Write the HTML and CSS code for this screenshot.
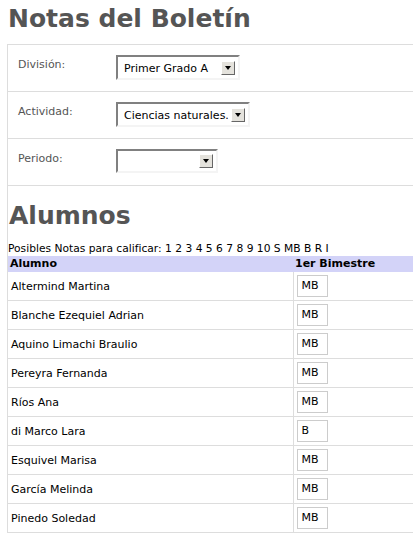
FILE: index.html
```html
<!DOCTYPE html>
<html lang="es">
<head>
<meta charset="utf-8">
<title>Notas del Boletín</title>
<link rel="stylesheet" href="styles.css">
</head>
<body>
<h1 class="title">Notas del Boletín</h1>
<div class="panel">
  <div class="form">
    <div class="form-row">
      <span class="label">División:</span>
      <div class="select sel-division"><span class="sel-text">Primer Grado A</span><span class="arrow"></span></div>
    </div>
    <div class="form-row">
      <span class="label">Actividad:</span>
      <div class="select sel-actividad"><span class="sel-text">Ciencias naturales.</span><span class="arrow"></span></div>
    </div>
    <div class="form-row">
      <span class="label">Periodo:</span>
      <div class="select sel-periodo"><span class="sel-text"></span><span class="arrow"></span></div>
    </div>
  </div>
  <h2 class="subtitle">Alumnos</h2>
  <p class="hint">Posibles Notas para calificar: 1 2 3 4 5 6 7 8 9 10 S MB B R I</p>
  <table class="grades">
    <thead>
      <tr><th class="col-name">Alumno</th><th class="col-grade">1er Bimestre</th></tr>
    </thead>
    <tbody>
      <tr><td>Altermind Martina</td><td><span class="grade-box">MB</span></td></tr>
      <tr><td>Blanche Ezequiel Adrian</td><td><span class="grade-box">MB</span></td></tr>
      <tr><td>Aquino Limachi Braulio</td><td><span class="grade-box">MB</span></td></tr>
      <tr><td>Pereyra Fernanda</td><td><span class="grade-box">MB</span></td></tr>
      <tr><td>Ríos Ana</td><td><span class="grade-box">MB</span></td></tr>
      <tr><td>di Marco Lara</td><td><span class="grade-box">B</span></td></tr>
      <tr><td>Esquivel Marisa</td><td><span class="grade-box">MB</span></td></tr>
      <tr><td>García Melinda</td><td><span class="grade-box">MB</span></td></tr>
      <tr><td>Pinedo Soledad</td><td><span class="grade-box">MB</span></td></tr>
    </tbody>
  </table>
</div>
</body>
</html>
```
FILE: styles.css
```css
html, body {
  margin: 0;
  padding: 0;
  background: #fff;
}
body {
  font-family: "DejaVu Sans", Verdana, sans-serif;
  font-size: 11px;
  color: #000;
  padding-left: 7px;
  overflow: hidden;
}
.title {
  margin: 0;
  padding: 4px 0 0 1px;
  height: 44px;
  box-sizing: border-box;
  font-size: 25px;
  font-weight: bold;
  color: #555;
  line-height: 30px;
}
.panel {
  border-top: 1px solid #ddd;
  border-left: 1px solid #ddd;
}
.form-row {
  display: flex;
  align-items: flex-start;
  height: 46px;
  border-bottom: 1px solid #ddd;
}
.label {
  width: 98px;
  padding: 13px 0 0 10px;
  color: #555;
  line-height: 13px;
}
.select {
  margin-top: 10px;
  height: 25px;
  box-sizing: border-box;
  border-top: 2px solid #808080;
  border-left: 2px solid #808080;
  border-right: 2px solid #f4f4f4;
  border-bottom: 2px solid #f4f4f4;
  display: flex;
  align-items: center;
  background: #fff;
}
.sel-text {
  flex: 1;
  padding-left: 6px;
  white-space: nowrap;
  overflow: hidden;
  line-height: 13px;
  padding-top: 1px;
}
.sel-division { width: 124px; }
.sel-actividad { width: 134px; }
.sel-periodo { width: 102px; height: 24px; }
.arrow {
  width: 14px;
  height: 14px;
  box-sizing: border-box;
  margin-right: 3px;
  background: #e4e2dc;
  border-top: 1px solid #fff;
  border-left: 1px solid #fff;
  border-right: 1px solid #666;
  border-bottom: 1px solid #666;
  position: relative;
  flex: none;
}
.arrow::after {
  content: "";
  position: absolute;
  left: 3px;
  top: 4px;
  border-left: 3.5px solid transparent;
  border-right: 3.5px solid transparent;
  border-top: 4px solid #000;
}
.subtitle {
  margin: 0;
  padding: 15px 0 0 1px;
  height: 55px;
  box-sizing: border-box;
  font-size: 25px;
  font-weight: bold;
  color: #555;
  line-height: 30px;
}
.hint {
  margin: 0;
  font-size: 10.7px;
  line-height: 13px;
  padding-top: 1px;
  height: 15px;
  box-sizing: border-box;
  white-space: nowrap;
}
.grades {
  border-collapse: collapse;
  width: 100%;
}
.grades th {
  background: #d3d3f8;
  text-align: left;
  font-weight: bold;
  height: 16px;
  padding: 0 0 0 2px;
  line-height: 16px;
}
.grades th.col-name { width: 283px; }
.grades td {
  height: 28px;
  padding: 0 0 0 3px;
  border-bottom: 1px solid #ddd;
  vertical-align: middle;
}
.grades td + td {
  border-left: 1px solid #ddd;
  padding-left: 3px;
}
.grade-box {
  display: block;
  width: 31px;
  height: 22px;
  box-sizing: border-box;
  border: 1px solid #ccc;
  line-height: 20px;
  padding-left: 4px;
}
```
